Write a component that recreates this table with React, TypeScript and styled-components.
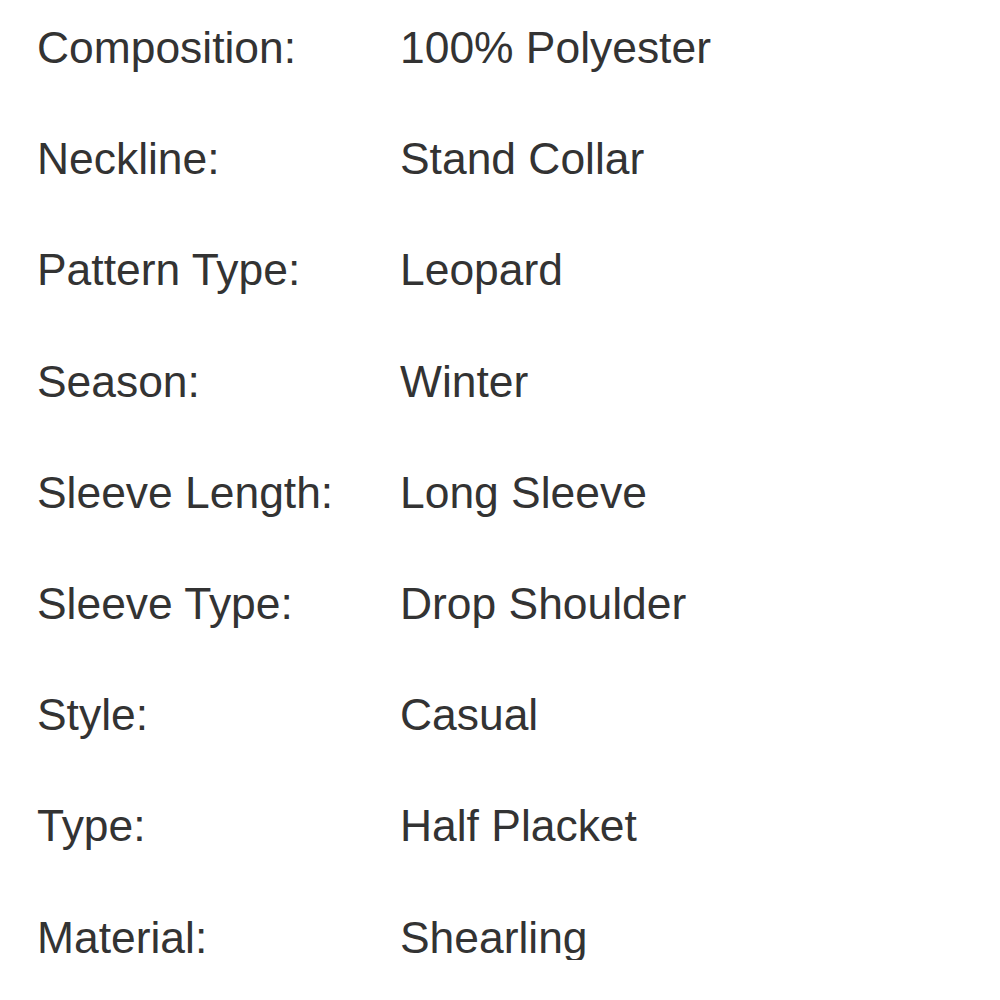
import React from "react";
import styled, { createGlobalStyle } from "styled-components";

const GlobalStyle = createGlobalStyle`
  html, body {
    margin: 0;
    padding: 0;
    background: #ffffff;
  }
  body {
    font-family: "Liberation Sans", Arial, sans-serif;
  }
`;

const SpecList = styled.dl`
  margin: 0;
  padding: 26px 0 0 37px;
  display: grid;
  grid-template-columns: 363px 1fr;
  row-gap: 67.2px;
  font-size: 44.4px;
  line-height: 44px;
  color: #333333;
`;

const Label = styled.dt`
  margin: 0;
  white-space: nowrap;
`;

const Value = styled.dd`
  margin: 0;
  white-space: nowrap;
`;

const specs: [string, string][] = [
  ["Composition:", "100% Polyester"],
  ["Neckline:", "Stand Collar"],
  ["Pattern Type:", "Leopard"],
  ["Season:", "Winter"],
  ["Sleeve Length:", "Long Sleeve"],
  ["Sleeve Type:", "Drop Shoulder"],
  ["Style:", "Casual"],
  ["Type:", "Half Placket"],
  ["Material:", "Shearling"],
];

export default function App() {
  return (
    <>
      <GlobalStyle />
      <SpecList>
        {specs.map(([label, value]) => (
          <React.Fragment key={label}>
            <Label>{label}</Label>
            <Value>{value}</Value>
          </React.Fragment>
        ))}
      </SpecList>
    </>
  );
}
